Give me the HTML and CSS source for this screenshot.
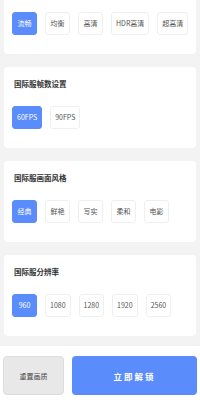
FILE: index.html
```html
<html lang="zh">
<head>
  <meta charset="UTF-8">
  <title>画质设置</title>
  <link rel="stylesheet" href="styles.css">
</head>
<body>

  <!-- Settings list (first card's title scrolled out of view) -->
  <div id="settings">

    <section class="card first">
      <div class="options">
        <div class="option active">流畅</div>
        <div class="option">均衡</div>
        <div class="option">高清</div>
        <div class="option">HDR高清</div>
        <div class="option">超高清</div>
      </div>
    </section>

    <section class="card">
      <div class="card-title">国际服帧数设置</div>
      <div class="options">
        <div class="option active">60FPS</div>
        <div class="option">90FPS</div>
      </div>
    </section>

    <section class="card">
      <div class="card-title">国际服画面风格</div>
      <div class="options">
        <div class="option active">经典</div>
        <div class="option">鲜艳</div>
        <div class="option">写实</div>
        <div class="option">柔和</div>
        <div class="option">电影</div>
      </div>
    </section>

    <section class="card">
      <div class="card-title">国际服分辨率</div>
      <div class="options">
        <div class="option active">960</div>
        <div class="option">1080</div>
        <div class="option">1280</div>
        <div class="option">1920</div>
        <div class="option">2560</div>
      </div>
    </section>

  </div>

  <!-- Bottom action bar -->
  <div id="actions">
    <div class="btn reset">重置画质</div>
    <div class="btn unlock">立即解锁</div>
  </div>

</body>
</html>
```

FILE: styles.css
```css
html,
body {
  background-color: #f3f3f3;
  font-family: "Noto Sans CJK SC", "Noto Sans", sans-serif;
  height: 100%;
  margin: 0;
}

body {
  display: flex;
  flex-direction: column;
}

#settings {
  flex: 1;
  overflow: hidden;
  padding: 0 4px;
  display: flex;
  flex-direction: column;
  gap: 13px;
}

.card {
  background-color: white;
  border-radius: 4px;
  padding: 12px 8px 19px 8px;
  flex-shrink: 0;
}

.card.first {
  border-radius: 0 0 4px 4px;
}

.card-title {
  color: #333;
  font-size: 7.5px;
  font-weight: bold;
  height: 10px;
  line-height: 10px;
  padding-left: 2px;
  margin-bottom: 17px;
}

.options {
  display: flex;
  gap: 8px;
}

.option {
  background-color: white;
  border: 1px solid #efefef;
  border-radius: 3px;
  box-sizing: border-box;
  color: #555;
  flex-shrink: 0;
  font-size: 7px;
  height: 23px;
  line-height: 21px;
  min-width: 25px;
  padding: 0 4px;
  text-align: center;
  white-space: nowrap;
}

.option.active {
  background-color: #5a8cfb;
  border-color: #5a8cfb;
  color: white;
}

#actions {
  background-color: white;
  display: flex;
  gap: 8px;
  height: 54px;
  box-sizing: border-box;
  padding: 10px 3px 5px 3px;
}

.btn {
  border-radius: 4px;
  box-sizing: border-box;
  display: flex;
  align-items: center;
  justify-content: center;
}

.btn.reset {
  background-color: #e8e8e8;
  border: 1px solid #dcdcdc;
  color: #444;
  font-size: 7px;
  width: 61px;
}

.btn.unlock {
  background-color: #5a8cfb;
  color: white;
  flex: 1;
  font-size: 8.5px;
  font-weight: bold;
  letter-spacing: 2px;
}
```
